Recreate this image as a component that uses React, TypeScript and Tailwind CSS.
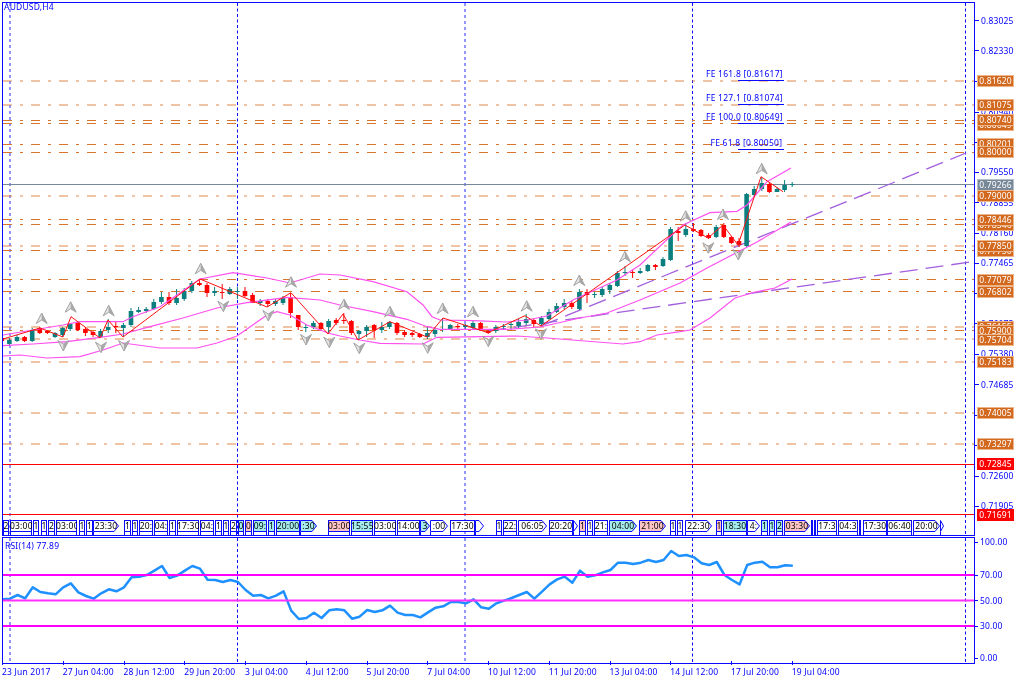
import React from "react";

const LEVELS: [number, number?][] = [
  [81], [105], [120.5], [123.5], [144.5], [152.5], [196], [219.5], [224.5], [246], [250.5], [279.5], [291.5],
  [327], [330.5], [339], [362], [413], [444],
];

// [top, bottom, high, low, up]
const C: [number, number, number, number, number][] = [
  [338,341,336,343,0],[340,344,338,346,1],[337,341,335,342,1],[337,341,336,342,0],[330,341,328,342,1],[328,333,327,334,0],
  [331,333,330,334,0],[333,337,332,338,1],[328,335,327,337,1],[324,329,323,331,1],[323,330,322,331,0],[329,333,327,336,0],
  [332,335,331,337,0],[331,337,329,338,1],[327,330,319,333,1],[326,327,322,333,0],[325,328,323,337,1],[311,325,308,327,1],
  [310,312,307,313,1],[309,311,307,313,1],[302,309,299,310,1],[297,302,292,304,1],[297,303,292,305,0],[298,303,289,305,1],
  [291,299,288,301,1],[283,291,281,293,1],[283,285,279,286,0],[285,293,283,297,0],[291,293,287,296,1],[292,293,284,299,0],
  [289,294,287,295,1],[291,292,287,299,1],[291,296,287,297,0],[295,303,293,303,0],[301,303,299,306,1],[301,304,299,307,0],
  [301,304,299,306,1],[298,303,296,305,1],[297,313,293,318,0],[315,327,315,330,0],[327,328,324,332,1],[323,327,321,329,1],
  [323,329,322,331,0],[321,327,319,333,1],[320,323,318,325,0],[320,321,313,324,0],[321,333,320,335,0],[331,334,330,339,1],
  [327,331,325,337,1],[325,330,324,338,0],[327,330,322,333,1],[322,327,321,329,1],[323,333,322,335,0],[332,335,330,337,0],
  [333,335,332,337,0],[334,337,333,338,0],[333,337,327,339,1],[330,334,327,337,1],[329,330,318,332,1],[325,329,324,330,1],
  [326,327,324,329,0],[325,327,324,329,1],[323,328,321,329,1],[323,329,322,330,0],[331,333,330,334,0],[327,331,325,333,1],
  [326,327,324,330,1],[324,325,322,330,1],[322,326,319,328,1],[319,323,314,325,1],[320,324,318,328,0],[318,324,316,326,1],
  [312,319,309,320,1],[306,312,303,313,1],[303,307,299,309,1],[303,307,301,309,0],[292,309,289,310,1],[292,295,289,303,0],
  [294,295,292,298,1],[289,295,287,297,1],[285,290,283,294,1],[273,286,271,287,1],[272,273,266,276,1],[272,273,270,278,0],
  [271,273,268,274,1],[265,271,264,272,1],[265,267,264,270,0],[259,266,257,267,1],[229,260,227,261,1],[231,233,227,241,0],
  [229,235,223,237,1],[229,231,223,232,0],[230,236,229,237,0],[235,238,233,239,0],[227,237,225,238,1],[225,237,223,238,0],
  [237,243,236,244,0],[241,245,238,247,0],[194,246,193,247,1],[189,195,186,197,1],[183,189,177,191,1],[184,192,182,193,0],
  [189,192,187,192,1],[185,190,180,192,1],[184,185,182,187,1],
];

const poly = (p: number[][]) => p.map((q) => q.join(",")).join(" ");

const UPPER = [[3,335],[33,330],[63,325],[80,321.7],[123,321.7],[133,316.7],[160,306.7],[187,288],[200,279],[233,272.7],[267,278],[290,283],[320,274],[340,275],[373,281.7],[407,291.7],[423,305],[432,316.7],[440,320],[473,320.7],[507,322],[527,320],[547,316],[573,300],[617,280],[640,265],[670,236.7],[683,225],[710,212.7],[737,211.3],[747,205],[767,181.7],[791,168]];
const MIDDLE = [[3,345.7],[33,344],[67,341.7],[100,337.3],[123,334],[150,326.7],[183,318],[217,308],[247,302.7],[287,297.3],[320,300],[340,305],[373,311.7],[407,319.3],[427,326.7],[440,329.3],[507,329.3],[540,327],[580,318],[607,313],[640,300],[680,283],[707,268],[757,242],[791,222]];
const LOWER = [[3,356],[20,355],[47,358],[80,356.7],[103,350],[123,343],[160,348],[197,348],[217,343],[237,336],[267,315],[277,311.7],[290,315],[307,325],[328,333],[340,336],[360,340],[380,343.3],[423,344],[437,337.3],[517,336],[547,338],[623,344],[640,341.7],[657,335],[680,331.7],[690,330],[710,318],[735,298],[755,292],[775,288],[792,279]];
const ZIG = [[3,339],[40,328],[63,337],[71,316.7],[100,338],[108,320],[123,337],[200,279],[267,307],[291,292.7],[328,334],[343,314],[358,340],[390,321.7],[427,337],[443,318],[488,332.7],[525,315.7],[541,326],[685,225],[708,238],[723,225],[738,245],[761,176.7],[783,191.7]];

const UP_ARROWS = [[41.7,319],[70.7,307.7],[108.7,311.3],[200.7,269.3],[291,282.7],[344,305],[390,312.3],[442.7,309],[473,312.3],[526.7,306.7],[579.3,281],[625,257.3],[685.7,216.7],[723,215],[761.7,169.3]];
const DOWN_ARROWS = [[63.3,345],[101,346.7],[124,345],[223.3,305.7],[268.3,315],[306,339],[329.3,341.7],[359.3,347.7],[427.7,347.3],[488.3,340.7],[541,333.3],[708.3,247.3],[738.3,254]];

const RSI_A = [208,206,195,205,172,186,190,193,172,160,187,198,206,190,178,184,172,142,140,135,122,108,144,137,122,108,116,149,150,156,150,156,180,197,195,205,197,184,242,267,264,248,264,241,238,241,266,260,240,246,241,227,248,255,255,262,247,233,229,216,216,220,208,232,236,220,212,204,195,186,206,185,163,148,140,158,122,140,136,127,120,98,98,102,98,90,96,90,63,78,75,82,100,105,96,135,150,163,105,98,95,112,112,106,107];
const RSI = RSI_A.map((v, i) => [2.4 + 7.6 * i, 530 + v / 3]);

const FE = [
  { t: "FE 161.8 [0.81617]", x: 706, y: 74, ly: 80.5 },
  { t: "FE 127.1 [0.81074]", x: 706, y: 98, ly: 104.5 },
  { t: "FE 100.0 [0.80649]", x: 706, y: 117, ly: 123.5 },
  { t: "FE 61.8 [0.80050]", x: 710.5, y: 142.5, ly: 149.5 },
];

const TICKS: [string, number][] = [
  ["0.83025",20.5],["0.82330",50.5],["0.81635",81],["0.80940",112],["0.80245",142],["0.79550",172],["0.78855",202.5],["0.78160",233],["0.77465",263],["0.76770",293],["0.76075",323.5],["0.75380",354],["0.74685",384.5],["0.73990",415],["0.73295",445],["0.72600",476],["0.71905",506],
];
const TAGS: [string, number, string][] = [
  ["0.81620",81,"o"],["0.81075",105,"o"],["0.80649",125,"o"],["0.80740",120,"o"],["0.80201",143.5,"o"],["0.80000",152,"o"],["0.79266",184.5,"g"],["0.79000",196,"o"],
  ["0.78346",225,"o"],["0.78446",219.5,"o"],["0.77750",251,"o"],["0.77850",246,"o"],["0.77079",279.5,"o"],["0.76802",291.5,"o"],
  ["0.76155",327,"o"],["0.75900",331,"o"],["0.75704",339.5,"o"],["0.75183",362,"o"],["0.74005",413,"o"],["0.73297",444,"o"],["0.72845",464,"r"],["0.71691",514.5,"r"],
];

// label, left x, right x, kind (w white, c cyan, p pink), arrow
const NEWS: [string, number, number, string, number][] = [
  ["2",3,9,"w",0],["03:00",10,32,"w",0],["1",33,39,"w",0],["1",41,47,"w",0],["2",48,55,"w",0],["03:00",56,77,"w",0],["1",79,85,"w",0],["1",86,93,"w",0],["23:30",93,119,"w",1],
  ["1",124,131,"w",0],["1",132,138,"w",0],["20:",139,153,"w",0],["04:",154,168,"w",0],["1",169,176,"w",0],["17:30",177,199,"w",0],["04:",200,214,"w",0],["1",215,222,"w",0],["1",223,229,"w",0],["2",230,237,"w",0],
  ["0",238,244,"c",0],["0",245,252,"p",0],["09:",253,267,"c",0],["1",268,275,"c",0],["20:00",276,300,"c",0],[":30",300,317,"c",1],
  ["03:00",328,350,"p",0],["15:55",351,373,"c",0],["03:00",374,396,"w",0],["14:00",397,420,"w",0],["3",420,430,"c",1],[":00",430,448,"w",1],["17:30",450,475,"w",0],["",475,484,"w",1],
  ["1",496,502,"w",0],["22:",503,517,"w",0],["06:05",518,547,"w",1],["20:20",549,573,"w",0],["",573,578,"w",1],["1",579,586,"p",0],["1",587,593,"w",0],["21:",594,608,"w",0],["04:00",609,637,"c",1],["21:00",639,666,"p",1],
  ["1",670,676,"w",0],["1",677,683,"w",0],["22:30",685,712,"w",1],["1",716,722,"p",0],["18:30",723,747,"c",0],["4:",747,760,"w",1],["1",761,768,"c",0],["1",769,775,"c",0],["2",776,783,"c",0],["03:30",784,810,"p",1],
  ["",811,813,"w",0],["",814,816,"w",0],["17:3",817,837,"w",0],["04:3",838,858,"w",0],["",859,861,"w",0],["17:30",863,887,"w",0],["06:40",887,912,"w",0],["20:00",913,940,"w",1],["",940,944,"w",1],
];

const TIMES = ["23 Jun 2017","27 Jun 04:00","28 Jun 12:00","29 Jun 20:00","3 Jul 04:00","4 Jul 12:00","5 Jul 20:00","7 Jul 04:00","10 Jul 12:00","11 Jul 20:00","13 Jul 04:00","14 Jul 12:00","17 Jul 20:00","19 Jul 04:00"];

const BLUE = "#0a0aff";

function VLines({ y1, y2 }: { y1: number; y2: number }) {
  return (
    <g>
      <line x1={10} x2={10} y1={y1} y2={y2} stroke="#7a7aff" strokeWidth={1.6} strokeDasharray="3 3" />
      <line x1={237.5} x2={237.5} y1={y1} y2={y2} stroke={BLUE} strokeWidth={1} strokeDasharray="3 2.5" />
      <line x1={465} x2={465} y1={y1} y2={y2} stroke="#7a7aff" strokeWidth={1.6} strokeDasharray="3 3" />
      <line x1={692.5} x2={692.5} y1={y1} y2={y2} stroke={BLUE} strokeWidth={1} strokeDasharray="3 2.5" />
      <line x1={965.5} x2={965.5} y1={y1} y2={y2} stroke={BLUE} strokeWidth={1} strokeDasharray="3 2.5" />
    </g>
  );
}

function Arrow({ x, y, down }: { x: number; y: number; down?: boolean }) {
  const s = down ? -1 : 1;
  return (
    <g transform={`translate(${x} ${y}) scale(1 ${s})`}>
      <polygon points="0,-6 -5.5,4.5 0,1 5.5,4.5" fill="#e4e4e4" stroke="#8e8e8e" strokeWidth={0.8} strokeLinejoin="round" />
      <polygon points="0,-6 5.5,4.5 0,1" fill="#a8a8a8" />
    </g>
  );
}

function MainChart() {
  return (
    <svg className="absolute left-0 top-0" width={971} height={531} viewBox="3 3 971 531" fill="none">
      <VLines y1={3} y2={534} />
      {LEVELS.map(([y]) => (
        <line key={y} x1={3} x2={974} y1={y} y2={y} stroke="#d9742c" strokeOpacity={Number.isInteger(y) ? 0.85 : 1} strokeWidth={1} strokeDasharray="9 8 3 8" />
      ))}
      <line x1={3} x2={974} y1={184.5} y2={184.5} stroke="#778899" strokeWidth={1} />
      <line x1={3} x2={974} y1={464.5} y2={464.5} stroke="#ff0000" strokeWidth={1} />
      <line x1={3} x2={974} y1={514.5} y2={514.5} stroke="#ff0000" strokeWidth={1} />
      <line x1={541} y1={326} x2={966} y2={153} stroke="#a35fdc" strokeWidth={1.3} strokeDasharray="18 8" />
      <line x1={488} y1={331} x2={974} y2={261.5} stroke="#a35fdc" strokeWidth={1.3} strokeDasharray="18 8" />
      {C.map(([t, b, h, l, up], i) => {
        const x = 1.8 + 7.6 * i;
        const col = up ? "#0b7f7f" : "#ff0000";
        return (
          <g key={i}>
            <line x1={x} x2={x} y1={h} y2={l} stroke={col} strokeWidth={1} />
            <rect x={x - 2.3} y={t} width={4.6} height={Math.max(b - t, 1)} fill={col} />
          </g>
        );
      })}
      <polyline points={poly(UPPER)} stroke="#ff50f0" strokeWidth={1.2} />
      <polyline points={poly(MIDDLE)} stroke="#ff50f0" strokeWidth={1.2} />
      <polyline points={poly(LOWER)} stroke="#ff50f0" strokeWidth={1.2} />
      <polyline points={poly(ZIG)} stroke="#ff1010" strokeWidth={1} />
      {UP_ARROWS.map(([x, y]) => <Arrow key={x} x={x} y={y} />)}
      {DOWN_ARROWS.map(([x, y]) => <Arrow key={x} x={x} y={y} down />)}
      {FE.map((f) => (
        <line key={f.t} x1={738} x2={784} y1={f.ly} y2={f.ly} stroke={BLUE} strokeWidth={1} />
      ))}
    </svg>
  );
}

function RsiChart() {
  return (
    <svg className="absolute left-0 top-0" width={971} height={125} viewBox="3 538 971 125" fill="none">
      <VLines y1={538} y2={663} />
      <polyline points={poly(RSI)} stroke="#1e90ff" strokeWidth={2.5} strokeLinejoin="round" />
      <line x1={3} x2={974} y1={575} y2={575} stroke="#ff00ff" strokeWidth={2} />
      <line x1={3} x2={974} y1={600.5} y2={600.5} stroke="#ff30ff" strokeWidth={1.8} />
      <line x1={3} x2={974} y1={626} y2={626} stroke="#ff00ff" strokeWidth={2} />
    </svg>
  );
}

function NewsTag({ label, w, ml, kind, arrow }: { label: string; w: number; ml: number; kind: string; arrow: number }) {
  const bg = kind === "c" ? "#a6ecec" : kind === "p" ? "#ffc4c4" : "#ffffff";
  return (
    <div className="relative shrink-0 h-[15px]" style={{ width: w, marginLeft: ml }}>
      {arrow ? (
        <svg className="absolute left-0 top-0" width={w} height={12} viewBox={`0 0 ${w} 12`}>
          <polygon points={`0.5,0.5 ${Math.max(w - 5, 0.5)},0.5 ${w - 0.5},6 ${Math.max(w - 5, 0.5)},11.5 0.5,11.5`} fill={bg} stroke="#0a0aff" strokeWidth={1} />
        </svg>
      ) : (
        <div className="absolute left-0 top-0 w-full h-[12px] border border-[#0a0aff]" style={{ background: bg }} />
      )}
      <div className="absolute left-0 top-0 w-full h-[12px] overflow-hidden text-center text-black text-[8.5px] leading-[12px] whitespace-nowrap tracking-[0.2px]">
        {label}
      </div>
      {!arrow && <div className="absolute left-0 top-[12px] w-full h-[3px] border-x border-[#0a0aff]" />}
      {!!arrow && <div className="absolute left-0 top-[12px] h-[3px] w-px bg-[#0a0aff]" />}
    </div>
  );
}

function NewsStrip() {
  return (
    <div className="absolute left-0 bottom-0 w-full flex">
      {NEWS.map(([label, a, b, kind, arrow], i) => {
        const prev = i === 0 ? 3 : NEWS[i - 1][2] + 0;
        return <NewsTag key={i} label={label} w={b - a} ml={a - prev} kind={kind} arrow={arrow} />;
      })}
    </div>
  );
}

function PriceAxis() {
  return (
    <div className="relative w-[49px] h-[534px] shrink-0">
      {TICKS.map(([t, y]) => (
        <div key={t} className="absolute left-0 flex items-center h-[10px] text-[#0000ff]" style={{ top: y - 7 }}>
          <span className="w-[4px] h-px bg-[#0a0aff] mr-[2px]" />
          <span className="tracking-[0.15px]">{t}</span>
        </div>
      ))}
      {TAGS.map(([t, y, k]) => {
        const cls = k === "o" ? "bg-[#d2691e] border-[#eeb48a]" : k === "g" ? "bg-[#778899] border-[#b4bfc9]" : "bg-[#ff0000] border-[#ff0000]";
        return (
          <div key={t} className={`absolute left-[2px] w-[37px] h-[12px] border text-white text-center leading-[10px] tracking-[0.15px] ${cls}`} style={{ top: y - 8 }}>
            {t}
          </div>
        );
      })}
    </div>
  );
}

function RsiAxis() {
  const rows: [string, number][] = [["100.00", 542], ["70.00", 575], ["50.00", 600.5], ["30.00", 626], ["0.00", 658]];
  return (
    <div className="relative w-[49px] h-[127px] shrink-0">
      {rows.map(([t, y]) => (
        <div key={t} className="absolute left-0 flex items-center h-[10px] text-[#0000ff]" style={{ top: y - 542 }}>
          <span className="w-[3px] h-px bg-[#0a0aff] mr-[2px]" />
          <span className="tracking-[0.15px]">{t}</span>
        </div>
      ))}
    </div>
  );
}

export default function App() {
  return (
    <div className="relative w-[1024px] h-[683px] overflow-hidden bg-white">
      <div className="blur-[0.3px] pt-[2px] pl-[2px] text-[8.5px] leading-[10px] [font-family:'Noto_Sans','DejaVu_Sans',sans-serif]">
        <div className="flex">
          <div className="relative w-[973px] h-[534px] shrink-0 border border-[#0a0aff]">
            <MainChart />
            {FE.map((f) => (
              <div key={f.t} className="absolute text-[#0000ff] whitespace-pre tracking-[0.25px]" style={{ left: f.x - 3, top: f.y - 8 }}>
                {f.t}
              </div>
            ))}
            <div className="absolute left-[1px] top-[-1px] text-[#0000ff] tracking-[0.2px]">AUDUSD,H4</div>
            <NewsStrip />
          </div>
          <PriceAxis />
        </div>
        <div className="flex mt-[1px]">
          <div className="relative w-[973px] h-[127px] shrink-0 border border-[#0a0aff]">
            <RsiChart />
            <div className="absolute left-[2px] top-[3px] text-[#0000ff] tracking-[0.2px]">RSI(14) 77.89</div>
          </div>
          <RsiAxis />
        </div>
        <div className="flex">
          {TIMES.map((t) => (
            <div key={t} className="relative w-[60.75px] shrink-0 h-[15px] whitespace-nowrap text-[#0000ff] pt-[3px] tracking-[0.2px]">
              <span className="absolute left-0 top-[-3px] w-px h-[4px] bg-[#0a0aff]" />
              {t}
            </div>
          ))}
        </div>
      </div>
    </div>
  );
}
